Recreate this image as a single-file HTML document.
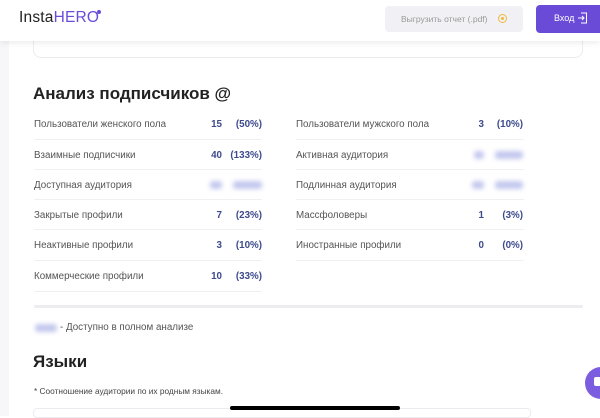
<!DOCTYPE html>
<html><head><meta charset="utf-8"><style>
*{margin:0;padding:0;box-sizing:border-box}
body{width:600px;height:416px;overflow:hidden;background:#fff;font-family:"Liberation Sans","Noto Sans CJK SC",sans-serif;position:relative;color:#333}
.a{position:absolute;white-space:nowrap}
.hdr{position:absolute;left:0;top:0;width:600px;height:41px;background:#fff;box-shadow:0 2px 6px rgba(0,0,0,0.08);z-index:2}
.lbl{font-size:9.8px;color:#555}
.num{font-size:9.8px;color:#3d4a8c;font-weight:bold;text-align:right}
.sep{position:absolute;height:1px;background:#f0f0f3}
.blur{position:absolute;height:8px;background:#c3c8ee;border-radius:3px;filter:blur(2.5px)}
</style></head><body>
<div class="a" style="left:0;top:0;width:9px;height:416px;background:#f7f7f9"></div>
<div class="a" style="left:33px;top:30px;width:550px;height:28px;border:1px solid #ececf0;border-top:none;border-radius:0 0 8px 8px"></div>
<div class="hdr">
 <div class="a" style="left:19px;top:9px;font-size:15.5px;color:#222;letter-spacing:0.2px">Insta<span style="color:#6a4bd8">HERO</span></div>
 <div class="a" style="left:97px;top:10px;width:4px;height:4px;border-radius:2px;background:#6a4bd8"></div>
 <div class="a" style="left:385px;top:6px;width:138px;height:26px;background:#f1f1f5;border-radius:4px"></div>
 <div class="a" style="left:401px;top:14px;font-size:8.5px;color:#999">Выгрузить отчет (.pdf)</div>
 <div class="a" style="left:498px;top:14px;width:9px;height:9px;border:1px solid #f0b840;border-radius:50%"></div>
 <div class="a" style="left:501px;top:17px;width:3px;height:3px;background:#f0b840;border-radius:50%"></div>
 <div class="a" style="left:536px;top:5px;width:70px;height:28px;background:#6a4bd8;border-radius:4px"></div>
 <div class="a" style="left:554px;top:13px;font-size:9px;color:#fff">Вход</div>
 <svg class="a" style="left:577px;top:12px" width="11" height="12" viewBox="0 0 11 12"><path d="M4 1H9.5V11H4M1 6H7M5 4L7 6L5 8" stroke="#fff" fill="none" stroke-width="1"/></svg>
</div>
<div class="a" style="left:33px;top:84px;font-size:17px;font-weight:bold;color:#222">Анализ подписчиков @</div>

<div class="a lbl" style="left:34px;top:119px">Пользователи женского пола</div>
<div class="a num" style="left:180px;top:119px;width:42px">15</div>
<div class="a num" style="left:220px;top:119px;width:42px">(50%)</div>
<div class="a lbl" style="left:296px;top:119px">Пользователи мужского пола</div>
<div class="a num" style="left:442px;top:119px;width:42px">3</div>
<div class="a num" style="left:481px;top:119px;width:42px">(10%)</div>

<div class="a lbl" style="left:34px;top:150px">Взаимные подписчики</div>
<div class="a num" style="left:180px;top:150px;width:42px">40</div>
<div class="a num" style="left:220px;top:150px;width:42px">(133%)</div>
<div class="a lbl" style="left:296px;top:150px">Активная аудитория</div>
<div class="blur" style="left:474px;top:151px;width:10px"></div><div class="blur" style="left:495px;top:151px;width:28px"></div>

<div class="a lbl" style="left:34px;top:180px">Доступная аудитория</div>
<div class="blur" style="left:210px;top:181px;width:12px"></div><div class="blur" style="left:233px;top:181px;width:29px"></div>
<div class="a lbl" style="left:296px;top:180px">Подлинная аудитория</div>
<div class="blur" style="left:472px;top:181px;width:12px"></div><div class="blur" style="left:495px;top:181px;width:28px"></div>

<div class="a lbl" style="left:34px;top:210px">Закрытые профили</div>
<div class="a num" style="left:180px;top:210px;width:42px">7</div>
<div class="a num" style="left:220px;top:210px;width:42px">(23%)</div>
<div class="a lbl" style="left:296px;top:210px">Массфоловеры</div>
<div class="a num" style="left:442px;top:210px;width:42px">1</div>
<div class="a num" style="left:481px;top:210px;width:42px">(3%)</div>

<div class="a lbl" style="left:34px;top:240px">Неактивные профили</div>
<div class="a num" style="left:180px;top:240px;width:42px">3</div>
<div class="a num" style="left:220px;top:240px;width:42px">(10%)</div>
<div class="a lbl" style="left:296px;top:240px">Иностранные профили</div>
<div class="a num" style="left:442px;top:240px;width:42px">0</div>
<div class="a num" style="left:481px;top:240px;width:42px">(0%)</div>

<div class="a lbl" style="left:34px;top:271px">Коммерческие профили</div>
<div class="a num" style="left:180px;top:271px;width:42px">10</div>
<div class="a num" style="left:220px;top:271px;width:42px">(33%)</div>

<div class="sep" style="left:34px;top:139px;width:228px"></div><div class="sep" style="left:296px;top:139px;width:228px"></div>
<div class="sep" style="left:34px;top:169px;width:228px"></div><div class="sep" style="left:296px;top:169px;width:228px"></div>
<div class="sep" style="left:34px;top:199px;width:228px"></div><div class="sep" style="left:296px;top:199px;width:228px"></div>
<div class="sep" style="left:34px;top:229px;width:228px"></div><div class="sep" style="left:296px;top:229px;width:228px"></div>
<div class="sep" style="left:34px;top:260px;width:228px"></div><div class="sep" style="left:296px;top:260px;width:228px"></div>
<div class="sep" style="left:34px;top:291px;width:228px"></div>

<div class="a" style="left:34px;top:305px;width:549px;height:3px;background:#ececf1;border-radius:2px"></div>
<div class="blur" style="left:35px;top:324px;width:22px"></div>
<div class="a lbl" style="left:60px;top:322px">- Доступно в полном анализе</div>
<div class="a" style="left:33px;top:352px;font-size:17px;font-weight:bold;color:#222">Языки</div>
<div class="a" style="left:34px;top:386px;font-size:8.3px;color:#444">* Соотношение аудитории по их родным языкам.</div>
<div class="a" style="left:33px;top:408px;width:498px;height:10px;border:1px solid #ececf0;border-radius:4px"></div>
<div class="a" style="left:230px;top:406px;width:170px;height:4px;background:#000;border-radius:2px"></div>
<div class="a" style="left:585px;top:367px;width:32px;height:32px;background:#7b5ee0;border-radius:50%"></div>
<div class="a" style="left:594px;top:377px;width:10px;height:9px;background:#fff;border-radius:2px"></div>
</body></html>
